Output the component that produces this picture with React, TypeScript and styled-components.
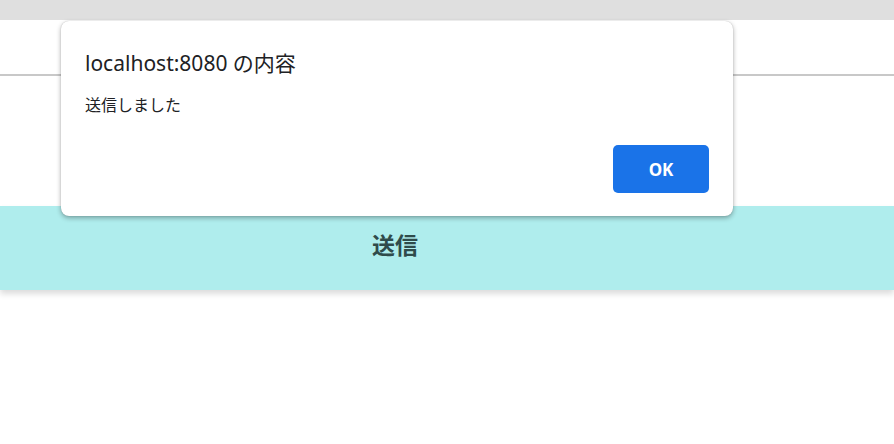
import styled, { createGlobalStyle } from "styled-components";

const GlobalStyle = createGlobalStyle`
  html, body {
    margin: 0;
    padding: 0;
    background: #ffffff;
    font-family: "Noto Sans", "Noto Sans CJK JP", sans-serif;
  }
`;

const Page = styled.div`
  position: relative;
  width: 894px;
  height: 444px;
  overflow: hidden;
  background: #ffffff;
`;

const TopBar = styled.div`
  height: 20px;
  background: #dfdfdf;
`;

const Header = styled.div`
  height: 54px;
  border-bottom: 2px solid #c8c8c8;
`;

const Spacer = styled.div`
  height: 130px;
`;

const SendBand = styled.button`
  display: block;
  width: 100%;
  height: 84px;
  padding: 0 104px 8px 0;
  border: none;
  background: #afeded;
  box-shadow: 0 4px 6px rgba(0, 0, 0, 0.14);
  color: #2f4b4b;
  font-family: "Noto Sans CJK JP", sans-serif;
  font-size: 23px;
  font-weight: 700;
  text-align: center;
`;

const Dialog = styled.div`
  position: absolute;
  left: 61px;
  top: 21px;
  width: 672px;
  height: 195px;
  box-sizing: border-box;
  padding: 27px 24px 23px 24px;
  background: #ffffff;
  border-radius: 8px;
  box-shadow: 0 2px 5px rgba(0, 0, 0, 0.32), 0 0 1px rgba(0, 0, 0, 0.25);
  display: flex;
  flex-direction: column;
`;

const Title = styled.div`
  font-size: 21px;
  line-height: 30px;
  color: #202124;
`;

const Message = styled.div`
  margin-top: 16px;
  font-size: 16px;
  line-height: 22px;
  color: #202124;
`;

const Actions = styled.div`
  margin-top: auto;
  display: flex;
  justify-content: flex-end;
`;

const OkButton = styled.button`
  width: 96px;
  height: 48px;
  border: none;
  border-radius: 5px;
  background: #1a73e8;
  color: #ffffff;
  font-family: "Noto Sans", sans-serif;
  font-size: 17px;
  font-weight: 700;
`;

const App = () => {
  return (
    <Page>
      <GlobalStyle />
      <TopBar />
      <Header />
      <Spacer />
      <SendBand>送信</SendBand>
      <Dialog>
        <Title>localhost:8080 の内容</Title>
        <Message>送信しました</Message>
        <Actions>
          <OkButton>OK</OkButton>
        </Actions>
      </Dialog>
    </Page>
  );
};

export default App;
